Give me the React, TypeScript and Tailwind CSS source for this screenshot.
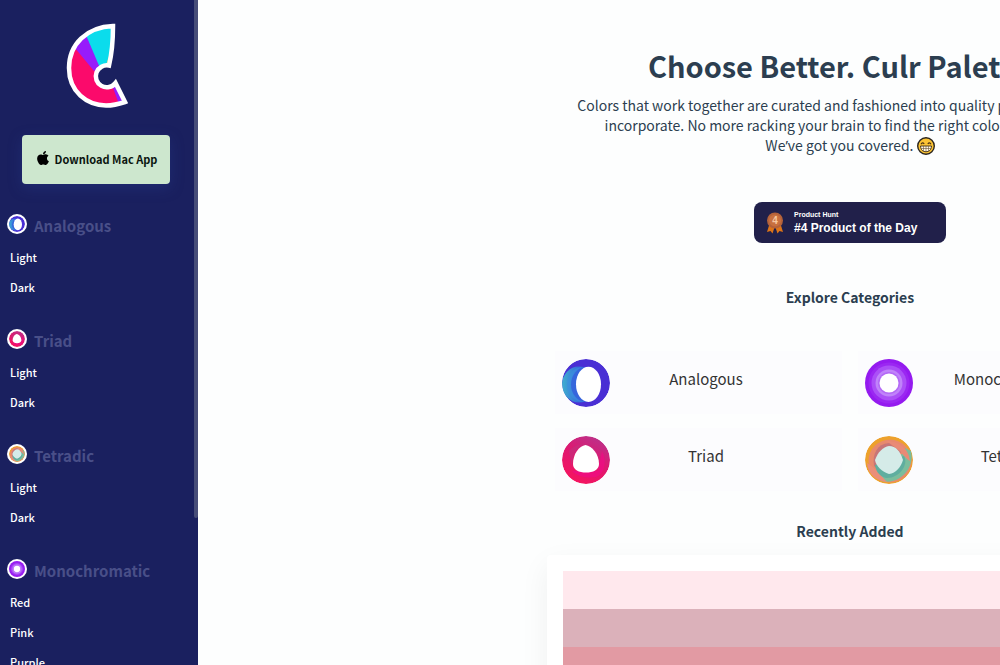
import { FaApple } from "react-icons/fa";

type Wheel = "analogous" | "triad" | "tetradic" | "monochromatic";

const groups: { title: string; wheel: Wheel; links: string[] }[] = [
  { title: "Analogous", wheel: "analogous", links: ["Light", "Dark"] },
  { title: "Triad", wheel: "triad", links: ["Light", "Dark"] },
  { title: "Tetradic", wheel: "tetradic", links: ["Light", "Dark"] },
  { title: "Monochromatic", wheel: "monochromatic", links: ["Red", "Pink", "Purple"] },
];

const categories: { label: string; wheel: Wheel }[] = [
  { label: "Analogous", wheel: "analogous" },
  { label: "Monochromatic", wheel: "monochromatic" },
  { label: "Triad", wheel: "triad" },
  { label: "Tetradic", wheel: "tetradic" },
];

const swatches = ["bg-[#ffe8ed]", "bg-[#dbb1ba]", "bg-[#e29aa3]", "bg-[#d9808c]"];

function WheelIcon({ wheel, className }: { wheel: Wheel; className: string }) {
  return (
    <svg viewBox="0 0 48 48" className={className} aria-hidden="true">
      <defs>
        <linearGradient id="wheel-blue" x1="0" y1="0" x2="1" y2="0">
          <stop offset="0" stopColor="#3fb0cf" />
          <stop offset="0.55" stopColor="#3563dc" />
          <stop offset="1" stopColor="#4a35d6" />
        </linearGradient>
        <linearGradient id="wheel-pink" x1="0.8" y1="0" x2="0.3" y2="1">
          <stop offset="0" stopColor="#b8338c" />
          <stop offset="0.5" stopColor="#e0176f" />
          <stop offset="1" stopColor="#f6145f" />
        </linearGradient>
        <clipPath id="wheel-clip">
          <circle cx="24" cy="24" r="24" />
        </clipPath>
      </defs>
      {wheel === "analogous" && (
        <g clipPath="url(#wheel-clip)">
          <circle cx="24" cy="24" r="24" fill="#4a2fd4" />
          <ellipse cx="17" cy="25.5" rx="17" ry="18" fill="url(#wheel-blue)" />
          <ellipse cx="21" cy="25.5" rx="16" ry="17.5" fill="#3c8fe0" opacity="0.6" />
          <ellipse cx="24" cy="25.5" rx="15" ry="17.5" fill="#3559dc" opacity="0.7" />
          <ellipse cx="30" cy="25" rx="14" ry="18.5" fill="#4a2fd4" />
          <ellipse cx="26.5" cy="25.3" rx="12.5" ry="17.6" fill="#fff" />
        </g>
      )}
      {wheel === "triad" && (
        <g clipPath="url(#wheel-clip)">
          <circle cx="24" cy="24" r="24" fill="url(#wheel-pink)" />
          <path d="M7 15C14 6 29 6 40 15C34 10 28 8 23 8C15 9 10 20 10 31Z" fill="#c42f7c" opacity="0.7" />
          <path d="M40 15C45 25 43 38 34 41C28 42 17 42 10 35L36 35Z" fill="#ef0b86" opacity="0.7" />
          <path d="M23.500 9C30 10 37 18 37 28C37 34 31 36.500 24 36.500C17 36.500 11 34 11 28C11 18 17 10 23.500 9Z" fill="#fff" />
        </g>
      )}
      {wheel === "tetradic" && (
        <g clipPath="url(#wheel-clip)">
          <circle cx="24" cy="24" r="24" fill="#eda12c" />
          <circle cx="25" cy="25" r="21.500" fill="#e8896d" />
          <path d="M46 15A25 25 0 0 1 16 45C8 36 14 28 24 24C34 20 40 18 40 12Z" fill="#7bbd9c" />
          <path d="M21 5C33 5 44 12 45 25C38 21 36 13 21 5Z" fill="#e98a76" />
          <path d="M2 27C3 39 12 45 22 46C15 39 13 34 2 27Z" fill="#ea8e79" />
          <path d="M24 7C12 8 7 18 9 30L16 36L36 16Z" fill="#c77578" />
          <path d="M39 20C44 29 34 42 22 42C17 42 11 37 10 29Z" fill="#5fae9f" />
          <path d="M24 10C31 10 35 15 38 24C36 31 31 37 24 38C17 36 11 30 10 24C13 16 18 11 24 10Z" fill="#d5ebe8" />
        </g>
      )}
      {wheel === "monochromatic" && (
        <g>
          <circle cx="24" cy="24" r="24" fill="#941aef" />
          <circle cx="24" cy="24" r="20.500" fill="#9b27f2" />
          <circle cx="24" cy="24" r="17.500" fill="#ab4ff7" />
          <circle cx="24" cy="24" r="13.500" fill="#c083fa" />
          <circle cx="24" cy="24" r="11" fill="#b469f6" />
          <circle cx="24" cy="24" r="9.500" fill="#fff" />
        </g>
      )}
    </svg>
  );
}

function Logo() {
  const shape = "M58 11C32 12 14 29 14 53C14 77 32 90 51 90.500C58 90.500 64 89 70 87L60.500 68A11 11 0 1 1 54 50.500C57 38 58 26 58 11Z";
  return (
    <svg viewBox="0 0 90 100" className="h-[100px] w-[90px]" role="img" aria-label="Culr">
      <clipPath id="logo-clip">
        <path d={shape} />
      </clipPath>
      <g clipPath="url(#logo-clip)">
        <rect width="90" height="100" fill="#fb0a6b" />
        <path d="M20 33L31 18L48 50L39 56Z" fill="#971cfb" />
        <path d="M31 20L60 8L56 54L45 53Z" fill="#0bdcec" />
        <path d="M57 32L50 53L56 53Z" fill="#c5c763" />
        <path d="M57 70L62 66L74 92L65 92Z" fill="#971cfb" />
      </g>
      <path d={shape} fill="none" stroke="#fff" strokeWidth="4.500" />
    </svg>
  );
}

function GrinEmoji() {
  return (
    <svg viewBox="0 0 18 18" className="inline-block size-[18px] align-[-4px]" role="img" aria-label="grin">
      <circle cx="9" cy="9" r="8.300" fill="#fbc333" stroke="#2b2620" strokeWidth="1.400" />
      <path d="M4 7.200Q5.500 4.800 7.200 7M10.800 7Q12.500 4.800 14 7.200" fill="none" stroke="#4a3010" strokeWidth="1.200" />
      <path d="M3.500 9H14.500C14.300 13 12 14.700 9 14.700S3.700 13 3.500 9Z" fill="#fff8e4" stroke="#3b2a14" strokeWidth="0.900" />
      <path d="M4 11.500H14M6.500 9V14M9 9V14.500M11.500 9V14" stroke="#6b5636" strokeWidth="0.600" />
    </svg>
  );
}

function Medal() {
  return (
    <svg viewBox="0 0 18 22" className="h-[22px] w-[18px]" aria-hidden="true">
      <path d="M3.500 12L1 20L4.500 19L6.500 21.500L9 14L11.500 21.500L13.500 19L17 20L14.500 12Z" fill="#dd7418" />
      <circle cx="9" cy="8.500" r="8" fill="#b5623a" />
      <circle cx="9" cy="8.500" r="6" fill="#c8703f" />
      <text x="9" y="12" textAnchor="middle" fontSize="10" fontWeight="700" fontFamily="Liberation Sans, sans-serif" fill="#f8c8a0">
        4
      </text>
    </svg>
  );
}

function Sidebar() {
  return (
    <aside className="relative w-[198px] shrink-0 overflow-hidden bg-[#1a205f]">
      <div className="flex justify-center pt-[15px] pl-0.5">
        <a href="#home">
          <Logo />
        </a>
      </div>
      <div className="mt-5 flex justify-center pr-1.5">
        <button
          type="button"
          className="flex h-[49px] w-[148px] items-center justify-center gap-1 rounded-[4px] bg-[#cde7ce] text-[11px] font-bold text-[#0b150f] shadow-[0_4px_14px_rgba(40,60,140,0.4)]"
        >
          <FaApple className="mb-1 size-4 text-black" />
          Download Mac App
        </button>
      </div>
      <nav className="mt-[26px]">
        {groups.map((group) => (
          <section key={group.title} className="mb-[23px]">
            <h2 className="flex h-8 items-center gap-[7px] pl-[7px] text-[15px] font-bold text-[#494f88]">
              <span className="mb-1 flex size-5 items-center justify-center rounded-full bg-white">
                <WheelIcon wheel={group.wheel} className="size-4" />
              </span>
              {group.title}
            </h2>
            <ul>
              {group.links.map((link) => (
                <li key={link} className="h-[30px] pl-[10px] text-[11px] leading-[30px] font-medium text-white">
                  <a href={`#${group.wheel}-${link.toLowerCase()}`}>{link}</a>
                </li>
              ))}
            </ul>
          </section>
        ))}
      </nav>
      {/* scrollbar thumb */}
      <div className="absolute top-0 right-0 h-[518px] w-1 rounded-b bg-[#474d78]" />
    </aside>
  );
}

export default function App() {
  return (
    <div className="flex h-screen overflow-hidden bg-[#fdfefe] font-['Noto_Sans_CJK_SC',sans-serif] text-[#2c3e50]">
      <Sidebar />
      <main className="flex min-w-[1304px] flex-1 flex-col items-center">
        <h1 className="mt-[45px] text-[29px] leading-10 font-bold">Choose Better. Culr Palettes.</h1>
        <p className="mt-[10px] text-center text-sm leading-5 whitespace-nowrap">
          Colors that work together are curated and fashioned into quality palettes you can all
          <br />
          incorporate. No more racking your brain to find the right color combination.
          <br />
          We<span className="font-['Noto_Sans',sans-serif]">’</span>ve got you covered. <GrinEmoji />
        </p>

        <a
          href="#product-hunt"
          className="mt-[46px] flex h-[41px] w-[192px] shrink-0 items-center gap-[10px] rounded-lg bg-[#21204a] pl-3 font-['Liberation_Sans',sans-serif] font-bold text-white"
        >
          <Medal />
          <span>
            <span className="block text-[7px] leading-[10px]">Product Hunt</span>
            <span className="block text-[12px] leading-4">#4 Product of the Day</span>
          </span>
        </a>

        <h2 className="mt-[42px] text-sm leading-6 font-bold">Explore Categories</h2>
        <div className="mt-[42px] grid w-[590px] grid-cols-2 gap-x-4 gap-y-[14px]">
          {categories.map((category) => (
            <a
              key={category.label}
              href={`#${category.wheel}`}
              className="flex h-[63px] items-center bg-[#fcfcfe] pr-10 pl-[7px] text-[15px] text-[#333]"
            >
              <WheelIcon wheel={category.wheel} className="size-12" />
              <span className="mb-[6px] flex-1 text-center">{category.label}</span>
            </a>
          ))}
        </div>

        <h2 className="mt-7 text-sm leading-6 font-bold">Recently Added</h2>
        <div className="mt-3 w-[606px] rounded bg-white p-4 shadow-[0_10px_30px_rgba(0,0,0,0.06)]">
          {swatches.map((swatch) => (
            <div key={swatch} className={`h-[38px] ${swatch}`} />
          ))}
        </div>
      </main>
    </div>
  );
}
